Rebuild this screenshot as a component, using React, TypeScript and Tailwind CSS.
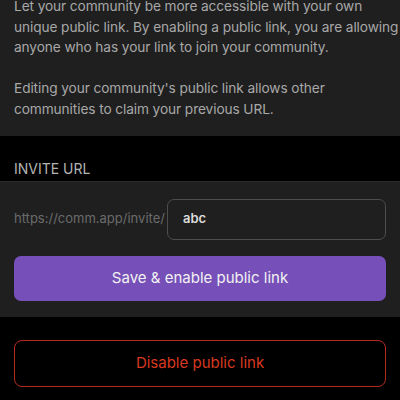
export default function App() {
  return (
    <div className="w-[400px] h-[400px] overflow-hidden bg-black font-['Inter','Liberation_Sans',sans-serif]">
      <section className="bg-[#1f1f1f] px-[14px] pb-[16px]">
        <div className="-mt-[4px] text-[13.7px] leading-[20.6px] tracking-[-0.1px] text-[#a8a8a8] whitespace-nowrap">
          <p>
            Let your community be more accessible with your own
            <br />
            unique public link. By enabling a public link, you are allowing
            <br />
            anyone who has your link to join your community.
          </p>
          <p className="mt-[20.6px]">
            Editing your community's public link allows other
            <br />
            communities to claim your previous URL.
          </p>
        </div>
      </section>

      <div className="px-[14px] pt-[23px] pb-[2px] text-[14px] leading-[20px] text-[#b4b4b4] uppercase">
        Invite URL
      </div>

      <section className="bg-[#1f1f1f] border-t border-[#2b2b2b] px-[14px] pt-[17px] pb-[16px] flex flex-col gap-[16px]">
        <div className="flex items-center">
          <span className="text-[13px] text-[#6b6b6b] whitespace-nowrap">
            https://comm.app/invite/
          </span>
          <div className="ml-[2px] flex-1 h-[41px] rounded-[7px] border border-[#4d4d4d] flex items-center px-[15px]">
            <span className="text-[13px] font-semibold text-[#dcdcdc]">abc</span>
          </div>
        </div>
        <button className="h-[45px] rounded-[7px] bg-[#7650b8] text-[15px] text-[#f2f2f2]">
          Save &amp; enable public link
        </button>
      </section>

      <div className="px-[14px] pt-[23px]">
        <button className="w-full h-[47px] rounded-[8px] border border-[#b42a1b] text-[15px] text-[#d8391f]">
          Disable public link
        </button>
      </div>
    </div>
  );
}
